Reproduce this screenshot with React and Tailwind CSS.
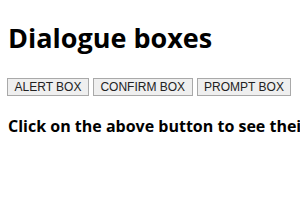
const BUTTONS = ["ALERT BOX", "CONFIRM BOX", "PROMPT BOX"];

const App = () => {
  return (
    <div className="w-[300px] h-[210px] overflow-hidden bg-white px-2 text-black">
      <h1 className="pt-[20px] text-[27px] leading-[35px] font-bold whitespace-nowrap font-['Open_Sans',sans-serif]">
        Dialogue boxes
      </h1>
      <div className="mt-[23px] -ml-px flex gap-1">
        {BUTTONS.map((label) => (
          <button
            key={label}
            className="h-[18px] px-[6.5px] bg-[#efefef] border border-[#a9a9a9] text-[12px] leading-[16px] text-[#222] whitespace-nowrap font-['Liberation_Sans',Arial,sans-serif]"
          >
            {label}
          </button>
        ))}
      </div>
      <p className="mt-[19px] text-[16px] leading-[22px] font-bold whitespace-nowrap font-['Open_Sans',sans-serif]">
        Click on the above button to see their output
      </p>
    </div>
  );
};

export default App;
